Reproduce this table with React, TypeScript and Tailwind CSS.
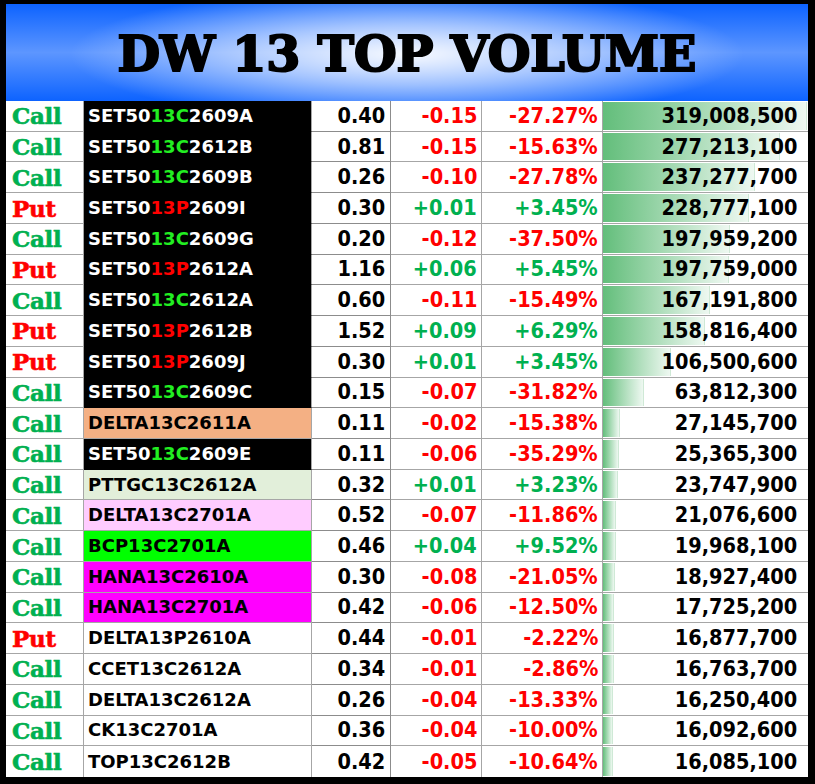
import React from "react";

type Row = {
  t: "Call" | "Put";
  name: string;
  mid?: string;
  tail?: string;
  bg: string;
  price: string;
  chg: string;
  pct: string;
  vol: number;
};

const B = "bg-black";
const rows: Row[] = [
  { t: "Call", name: "SET50", mid: "13C", tail: "2609A", bg: B, price: "0.40", chg: "-0.15", pct: "-27.27%", vol: 319008500 },
  { t: "Call", name: "SET50", mid: "13C", tail: "2612B", bg: B, price: "0.81", chg: "-0.15", pct: "-15.63%", vol: 277213100 },
  { t: "Call", name: "SET50", mid: "13C", tail: "2609B", bg: B, price: "0.26", chg: "-0.10", pct: "-27.78%", vol: 237277700 },
  { t: "Put", name: "SET50", mid: "13P", tail: "2609I", bg: B, price: "0.30", chg: "+0.01", pct: "+3.45%", vol: 228777100 },
  { t: "Call", name: "SET50", mid: "13C", tail: "2609G", bg: B, price: "0.20", chg: "-0.12", pct: "-37.50%", vol: 197959200 },
  { t: "Put", name: "SET50", mid: "13P", tail: "2612A", bg: B, price: "1.16", chg: "+0.06", pct: "+5.45%", vol: 197759000 },
  { t: "Call", name: "SET50", mid: "13C", tail: "2612A", bg: B, price: "0.60", chg: "-0.11", pct: "-15.49%", vol: 167191800 },
  { t: "Put", name: "SET50", mid: "13P", tail: "2612B", bg: B, price: "1.52", chg: "+0.09", pct: "+6.29%", vol: 158816400 },
  { t: "Put", name: "SET50", mid: "13P", tail: "2609J", bg: B, price: "0.30", chg: "+0.01", pct: "+3.45%", vol: 106500600 },
  { t: "Call", name: "SET50", mid: "13C", tail: "2609C", bg: B, price: "0.15", chg: "-0.07", pct: "-31.82%", vol: 63812300 },
  { t: "Call", name: "DELTA13C2611A", bg: "bg-[#f4b084]", price: "0.11", chg: "-0.02", pct: "-15.38%", vol: 27145700 },
  { t: "Call", name: "SET50", mid: "13C", tail: "2609E", bg: B, price: "0.11", chg: "-0.06", pct: "-35.29%", vol: 25365300 },
  { t: "Call", name: "PTTGC13C2612A", bg: "bg-[#e2efda]", price: "0.32", chg: "+0.01", pct: "+3.23%", vol: 23747900 },
  { t: "Call", name: "DELTA13C2701A", bg: "bg-[#ffccff]", price: "0.52", chg: "-0.07", pct: "-11.86%", vol: 21076600 },
  { t: "Call", name: "BCP13C2701A", bg: "bg-[#00ff00]", price: "0.46", chg: "+0.04", pct: "+9.52%", vol: 19968100 },
  { t: "Call", name: "HANA13C2610A", bg: "bg-[#ff00ff]", price: "0.30", chg: "-0.08", pct: "-21.05%", vol: 18927400 },
  { t: "Call", name: "HANA13C2701A", bg: "bg-[#ff00ff]", price: "0.42", chg: "-0.06", pct: "-12.50%", vol: 17725200 },
  { t: "Put", name: "DELTA13P2610A", bg: "bg-white", price: "0.44", chg: "-0.01", pct: "-2.22%", vol: 16877700 },
  { t: "Call", name: "CCET13C2612A", bg: "bg-white", price: "0.34", chg: "-0.01", pct: "-2.86%", vol: 16763700 },
  { t: "Call", name: "DELTA13C2612A", bg: "bg-white", price: "0.26", chg: "-0.04", pct: "-13.33%", vol: 16250400 },
  { t: "Call", name: "CK13C2701A", bg: "bg-white", price: "0.36", chg: "-0.04", pct: "-10.00%", vol: 16092600 },
  { t: "Call", name: "TOP13C2612B", bg: "bg-white", price: "0.42", chg: "-0.05", pct: "-10.64%", vol: 16085100 },
];

const MAX = 319008500;
const BAR = 204;

const num = "text-[22px] leading-none scale-x-[0.88] origin-right inline-block";

export default function App() {
  return (
    <div className="w-[815px] h-[784px] bg-black pt-[4px] pl-[6px] pr-[7px] pb-[7px] flex flex-col">
      <div className="h-[97px] flex items-center justify-center bg-[radial-gradient(ellipse_42%_70%_at_50%_52%,rgba(255,255,255,0.95)_0%,rgba(255,255,255,0.55)_45%,rgba(255,255,255,0)_100%),linear-gradient(to_bottom,#0d63ff_0%,#5d96ff_50%,#0d63ff_100%)]">
        <div className="font-['DejaVu_Serif',serif] font-bold text-[49px] leading-none text-black [-webkit-text-stroke:2.2px_black] pt-[3px]">
          DW 13 TOP VOLUME
        </div>
      </div>
      <div className="flex-1 bg-white grid grid-rows-[repeat(22,minmax(0,1fr))] font-['DejaVu_Sans',sans-serif] font-bold">
        {rows.map((r, i) => {
          const dark = r.bg === B;
          const last = i === rows.length - 1;
          const bb = last ? "" : "border-b";
          const pos = r.chg.startsWith("+");
          const col = pos ? "text-[#00b050]" : "text-[#ff0000]";
          return (
            <div key={i} className="grid grid-cols-[78px_228px_79px_91px_121px_1fr]">
              <div className={`flex items-center pl-[6px] border-r border-[#a6a6a6] ${bb}`}>
                <span
                  className={`font-['DejaVu_Serif',serif] font-bold text-[23px] leading-none tracking-[-0.3px] [-webkit-text-stroke:0.6px_currentColor] ${
                    r.t === "Call" ? "text-[#00b050]" : "text-[#ff0000]"
                  }`}
                >
                  {r.t}
                </span>
              </div>
              <div
                className={`flex items-center pl-[4px] text-[18px] leading-none border-r border-[#a6a6a6] ${bb} ${r.bg} ${
                  dark ? "text-white border-b-black" : "text-black"
                }`}
              >
                {r.mid ? (
                  <span>
                    {r.name}
                    <span className={r.mid === "13C" ? "text-[#22ee22]" : "text-[#ff0000]"}>{r.mid}</span>
                    {r.tail}
                  </span>
                ) : (
                  <span>{r.name}</span>
                )}
              </div>
              <div className={`flex items-center justify-end pr-[5px] text-black border-r border-[#8c8c8c] ${bb}`}>
                <span className={num}>{r.price}</span>
              </div>
              <div className={`flex items-center justify-end pr-[4px] border-r border-[#a6a6a6] ${bb} ${col}`}>
                <span className={num}>{r.chg}</span>
              </div>
              <div className={`flex items-center justify-end pr-[4px] border-r border-[#a6a6a6] ${bb} ${col}`}>
                <span className={num}>{r.pct}</span>
              </div>
              <div className={`relative flex items-center justify-end pr-[11px] text-black border-[#a6a6a6] ${bb}`}>
                <div
                  className="absolute left-0 top-[1px] bottom-[1px] bg-[linear-gradient(to_right,#63be7b,#eef8f1)] border-r border-[#cfe9d6]"
                  style={{ width: `${Math.round((r.vol / MAX) * BAR)}px` }}
                />
                <span className={`relative ${num}`}>{r.vol.toLocaleString("en-US")}</span>
              </div>
            </div>
          );
        })}
      </div>
    </div>
  );
}
